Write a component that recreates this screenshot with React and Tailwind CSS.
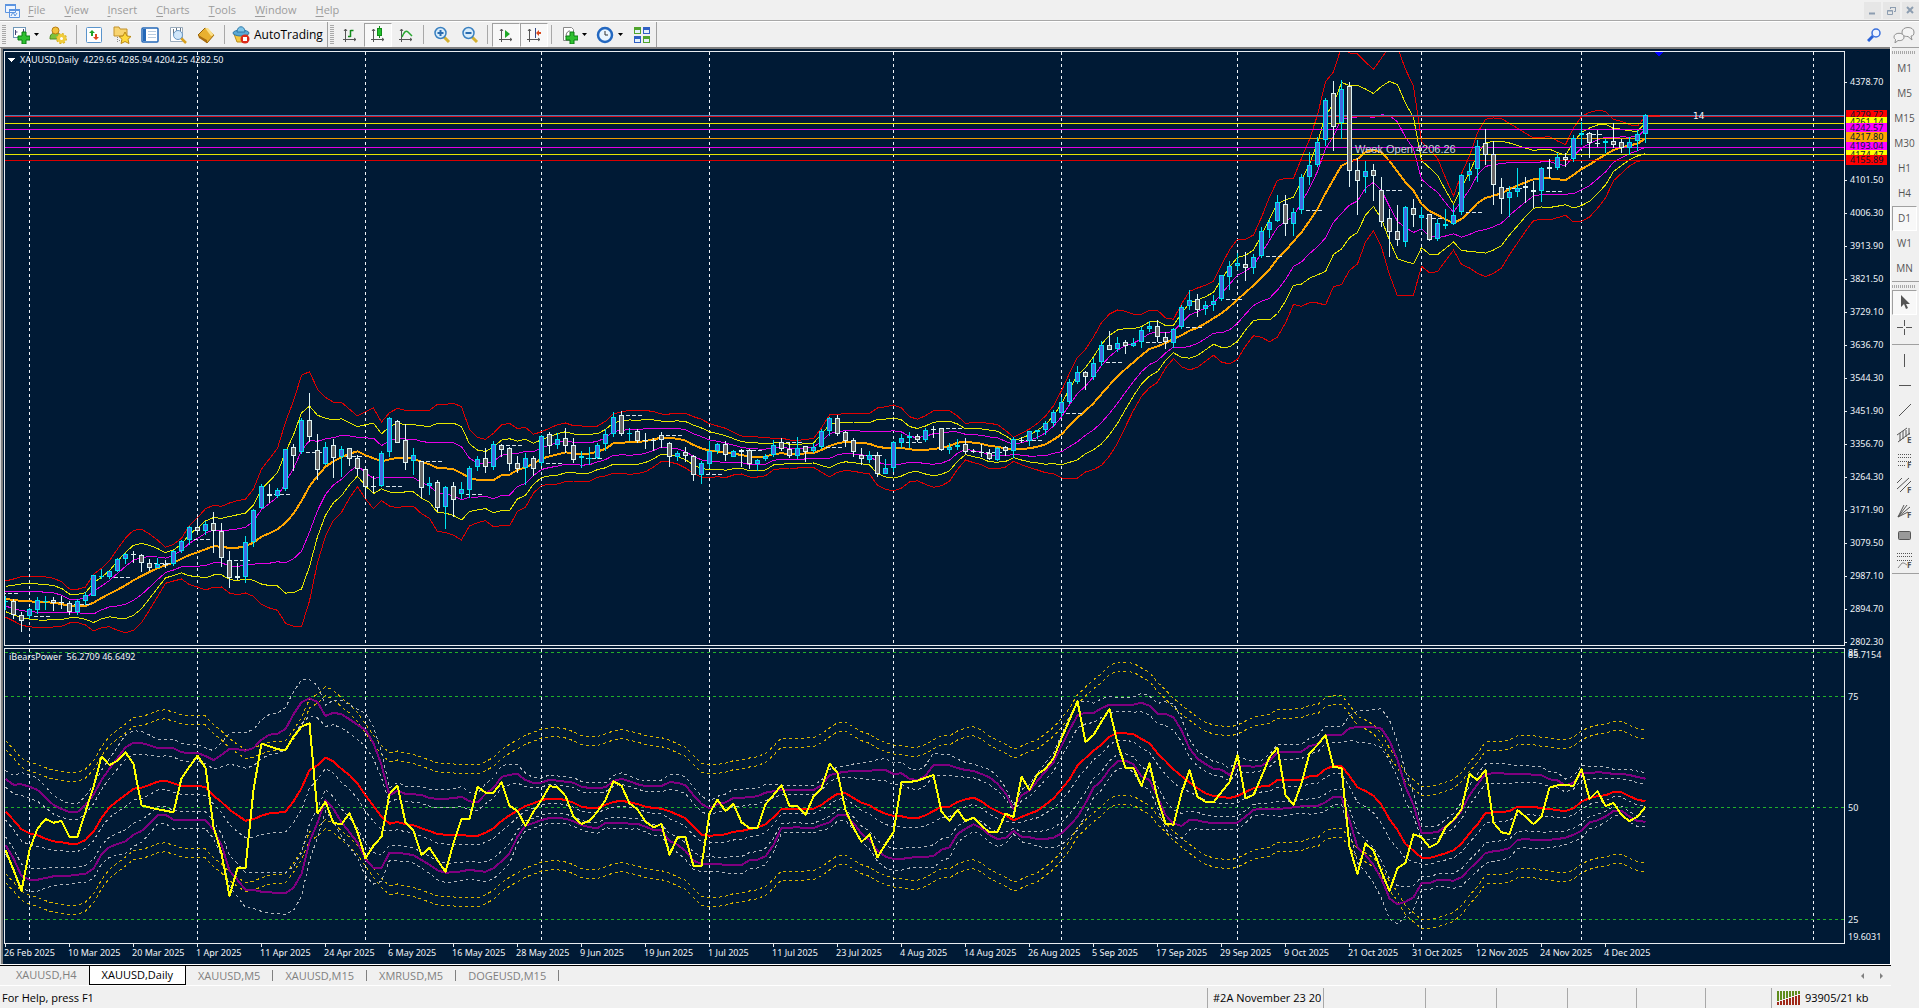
import React from 'react';

// Every stretch holds its own baseline; values are thirds of a pixel below it.
// Candle: direction, high, body top, body bottom, low
const candleStretches = [
  {
    start: 0,
    base: 350,
    rows: [
      ['u', 738, 752, 757, 780], ['d', 748, 753, 796, 806], ['d', 786, 795, 814, 846], ['u', 775, 778, 799, 808],
      ['u', 741, 751, 781, 792], ['u', 738, 752, 755, 780], ['d', 740, 751, 760, 782], ['d', 738, 757, 760, 777],
      ['d', 752, 760, 785, 796], ['u', 748, 754, 785, 795], ['u', 725, 736, 754, 766], ['u', 674, 676, 737, 739],
      ['u', 656, 679, 682, 688], ['u', 662, 664, 680, 687], ['u', 625, 628, 664, 666], ['u', 608, 613, 628, 642],
      ['d', 603, 613, 616, 638], ['d', 613, 616, 640, 665], ['d', 628, 640, 653, 663], ['u', 625, 642, 653, 655],
      ['d', 630, 642, 645, 654], ['u', 600, 604, 643, 648], ['u', 570, 574, 604, 608], ['u', 528, 532, 569, 584],
      ['d', 505, 532, 544, 556], ['u', 512, 522, 544, 554], ['d', 487, 520, 544, 608], ['d', 519, 544, 625, 650],
      ['d', 603, 631, 685, 713], ['d', 640, 679, 685, 690], ['u', 558, 577, 682, 698], ['u', 477, 479, 577, 590],
      ['u', 402, 409, 475, 477], ['d', 403, 433, 439, 458], ['u', 414, 421, 437, 443], ['u', 297, 298, 418, 422],
      ['d', 282, 290, 317, 362], ['u', 204, 211, 307, 311], ['d', 129, 211, 260, 276], ['d', 252, 301, 359, 389],
      ['u', 275, 292, 343, 345], ['d', 267, 286, 325, 383], ['u', 289, 298, 320, 380], ['d', 294, 295, 328, 348],
      ['d', 316, 325, 358, 378], ['d', 352, 358, 412, 448], ['d', 378, 408, 411, 430], ['u', 303, 310, 409, 412],
      ['u', 202, 205, 305, 320], ['d', 210, 214, 278, 280], ['d', 223, 271, 338, 360], ['u', 294, 316, 334, 375],
      ['d', 333, 334, 415, 443], ['u', 381, 398, 409, 434], ['d', 390, 397, 475, 486], ['u', 409, 410, 472, 536],
      ['d', 397, 409, 451, 500], ['u', 396, 418, 432, 446], ['u', 348, 355, 421, 445], ['u', 318, 328, 352, 362],
      ['d', 294, 325, 350, 368], ['u', 273, 283, 350, 360], ['d', 281, 286, 301, 320], ['d', 291, 295, 343, 362],
      ['d', 318, 340, 358, 370], ['u', 309, 325, 355, 405], ['d', 318, 325, 358, 378],
    ],
  },
  {
    start: 67,
    base: 380,
    rows: [
      ['u', 165, 168, 250, 258], ['d', 156, 163, 199, 222], ['u', 160, 177, 196, 208], ['d', 143, 175, 199, 218],
      ['d', 174, 196, 241, 248], ['u', 214, 229, 235, 263], ['u', 201, 233, 236, 256], ['u', 190, 196, 234, 238],
      ['u', 148, 163, 193, 214], ['u', 96, 112, 163, 170], ['d', 94, 105, 163, 168], ['u', 144, 160, 163, 184],
      ['d', 148, 153, 183, 188], ['d', 160, 179, 182, 206], ['d', 175, 179, 182, 212], ['d', 155, 166, 181, 205],
      ['d', 187, 188, 230, 261], ['u', 212, 220, 230, 243], ['d', 202, 217, 227, 245], ['d', 225, 229, 284, 302],
      ['u', 243, 250, 284, 311], ['u', 183, 214, 253, 263], ['u', 189, 192, 214, 223], ['d', 184, 192, 226, 243],
      ['u', 209, 214, 230, 232], ['d', 206, 210, 217, 260], ['d', 206, 211, 253, 268], ['u', 238, 241, 251, 274],
      ['u', 222, 229, 238, 244], ['u', 180, 196, 226, 232], ['d', 174, 187, 208, 212], ['d', 187, 208, 229, 233],
      ['u', 171, 205, 227, 236], ['d', 198, 199, 215, 245], ['u', 189, 202, 212, 220], ['u', 148, 152, 202, 206],
      ['u', 110, 115, 152, 168], ['d', 105, 115, 163, 169], ['d', 153, 157, 182, 200], ['d', 174, 181, 215, 230],
      ['d', 205, 226, 238, 256], ['u', 214, 226, 241, 248], ['d', 217, 226, 281, 290], ['u', 238, 265, 281, 283],
      ['u', 184, 187, 265, 275], ['u', 163, 175, 188, 205], ['u', 156, 169, 175, 203], ['d', 163, 169, 181, 187],
      ['u', 145, 151, 180, 185], ['d', 138, 148, 151, 173], ['d', 144, 145, 209, 212], ['u', 190, 202, 209, 221],
      ['u', 176, 196, 202, 210], ['d', 174, 193, 217, 223], ['d', 208, 214, 217, 220], ['d', 193, 217, 220, 232],
      ['d', 206, 220, 238, 240], ['u', 200, 203, 239, 243], ['d', 199, 202, 214, 229], ['u', 172, 178, 214, 235],
      ['d', 172, 180, 184, 189], ['u', 152, 154, 184, 199], ['u', 149, 151, 157, 178], ['u', 122, 130, 151, 164],
      ['u', 91, 97, 130, 142],
    ],
  },
  {
    start: 132,
    base: 50,
    rows: [
      ['u', 1042, 1057, 1090, 1100], ['u', 988, 997, 1057, 1062], ['u', 948, 967, 997, 1002], ['d', 963, 967, 982, 1020],
      ['u', 923, 940, 982, 990], ['u', 873, 886, 937, 947], ['d', 843, 886, 899, 900], ['u', 862, 880, 896, 906],
      ['d', 870, 877, 889, 911], ['u', 865, 880, 887, 892], ['u', 831, 841, 877, 895], ['u', 813, 829, 838, 845],
      ['d', 810, 829, 862, 875], ['d', 846, 862, 877, 896], ['u', 834, 836, 880, 893], ['u', 765, 770, 831, 836],
      ['u', 720, 751, 769, 779], ['d', 733, 748, 781, 801], ['u', 752, 766, 776, 795], ['u', 735, 754, 766, 783],
      ['u', 674, 676, 748, 752], ['u', 633, 649, 680, 720], ['u', 609, 640, 649, 661], ['d', 606, 643, 653, 692],
      ['u', 612, 620, 653, 671], ['u', 530, 542, 619, 624], ['u', 508, 515, 541, 563], ['u', 435, 455, 514, 517],
      ['d', 435, 461, 523, 557], ['u', 473, 485, 523, 557], ['u', 372, 380, 481, 491], ['u', 307, 346, 380, 404],
      ['u', 262, 277, 346, 350], ['u', 144, 151, 271, 287], ['d', 93, 130, 230, 302], ['u', 90, 118, 219, 266],
      ['d', 96, 109, 364, 411], ['d', 325, 361, 394, 494], ['u', 333, 364, 382, 429], ['d', 342, 361, 379, 452],
      ['d', 381, 421, 517, 530], ['d', 478, 505, 547, 621], ['d', 465, 542, 571, 587], ['u', 468, 472, 577, 590],
      ['d', 447, 475, 496, 530], ['u', 470, 496, 505, 540], ['d', 491, 493, 571, 574], ['u', 506, 520, 568, 574],
      ['u', 477, 523, 529, 536], ['u', 465, 496, 523, 525], ['u', 371, 374, 487, 494], ['u', 340, 364, 374, 394],
      ['u', 269, 289, 358, 396], ['d', 237, 280, 316, 345], ['d', 274, 313, 406, 464], ['d', 384, 412, 448, 491],
      ['u', 407, 427, 445, 500], ['u', 353, 415, 427, 440], ['d', 381, 409, 415, 458], ['d', 394, 421, 427, 475],
      ['u', 350, 355, 424, 455], ['d', 328, 352, 358, 385], ['u', 308, 322, 355, 360], ['d', 310, 322, 331, 350],
      ['u', 255, 265, 328, 335], ['u', 217, 250, 254, 285], ['d', 246, 250, 280, 323], ['d', 240, 279, 282, 291],
      ['u', 268, 274, 278, 308], ['d', 220, 274, 286, 293], ['d', 266, 277, 295, 310], ['u', 262, 277, 295, 315],
      ['u', 240, 253, 274, 303], ['u', 192, 196, 253, 279],
    ],
  },
];

// Middle line and outer upper band
const bandStretches = [
  {
    base: 350,
    rows: [
      [747, 693], [750, 687], [753, 680], [754, 678], [756, 679], [757, 681], [758, 685], [762, 695], [768, 717], [768, 718],
      [768, 711], [758, 673], [744, 655], [731, 632], [719, 597], [706, 564], [691, 541], [678, 538], [666, 552], [655, 570],
      [646, 592], [638, 583], [626, 565], [615, 526], [607, 503], [598, 476], [589, 466], [590, 469], [594, 459], [593, 452],
      [588, 447], [578, 417], [560, 357], [550, 326], [538, 295], [518, 216], [491, 153], [453, 76], [409, 65], [378, 118],
      [350, 142], [334, 157], [322, 157], [311, 178], [304, 198], [316, 185], [325, 174], [334, 216], [328, 188], [324, 175],
      [325, 181], [325, 181], [336, 181], [343, 181], [354, 163], [355, 163], [358, 160], [370, 170], [383, 238], [390, 262],
      [390, 268], [390, 250], [376, 225], [374, 220], [360, 236], [352, 232], [341, 253],
    ],
  },
  {
    base: 380,
    rows: [
      [236, 155], [229, 145], [223, 134], [217, 129], [220, 137], [222, 138], [221, 138], [215, 138], [206, 124], [190, 101],
      [188, 96], [187, 91], [187, 93], [183, 91], [178, 95], [173, 102], [174, 102], [176, 100], [182, 100], [195, 110],
      [205, 118], [212, 131], [214, 138], [219, 145], [221, 157], [225, 168], [230, 169], [231, 171], [230, 173], [222, 175],
      [220, 174], [222, 180], [223, 182], [220, 178], [219, 176], [210, 143], [198, 105], [190, 103], [186, 101], [187, 100],
      [189, 100], [191, 100], [200, 84], [204, 80], [204, 75], [204, 84], [208, 110], [210, 118], [210, 107], [207, 92],
      [204, 91], [198, 92], [188, 108], [185, 130], [188, 128], [191, 128], [198, 130], [200, 134], [206, 151], [208, 172],
      [207, 160], [205, 147], [200, 130], [193, 108], [179, 77],
    ],
  },
  {
    base: 50,
    rows: [
      [1153, 1022], [1127, 970], [1103, 922], [1082, 898], [1060, 861], [1032, 818], [1005, 792], [980, 780], [957, 784], [937, 793],
      [916, 793], [897, 781], [889, 781], [879, 804], [867, 808], [856, 762], [842, 724], [833, 714], [820, 706], [805, 694],
      [790, 644], [771, 600], [748, 568], [728, 568], [706, 555], [682, 502], [658, 441], [626, 391], [602, 385], [574, 385],
      [547, 325], [513, 268], [477, 195], [430, 95], [388, 66], [347, -10], [335, 9], [327, 12], [306, 36], [300, 58],
      [308, 24], [333, -8], [365, -8], [397, 58], [422, 108], [462, 275], [483, 298], [495, 325], [508, 383], [519, 438],
      [507, 371], [486, 318], [459, 248], [444, 208], [437, 204], [430, 206], [417, 220], [407, 235], [397, 250], [388, 264],
      [385, 262], [385, 260], [388, 273], [390, 284], [375, 234], [357, 200], [344, 187], [328, 181], [314, 184], [300, 208],
      [292, 214], [286, 224], [281, 228], [265, 199],
    ],
  },
];

// Average, upper channel, lower channel, power line
const powerRows = [
  [515, 417, 615, 630], [540, 434, 655, 690], [568, 433, 708, 752], [580, 440, 719, 630], [586, 450, 719, 566],
  [596, 472, 714, 537], [604, 495, 709, 548], [607, 507, 708, 543], [611, 516, 707, 590], [611, 516, 704, 590],
  [600, 495, 701, 515], [575, 464, 686, 440], [534, 420, 643, 350], [502, 386, 621, 375], [483, 354, 612, 362],
  [465, 322, 604, 337], [446, 308, 584, 372], [443, 309, 573, 496], [435, 316, 551, 502], [425, 324, 526, 508],
  [422, 323, 524, 512], [430, 325, 539, 517], [438, 337, 540, 415], [438, 339, 540, 380], [438, 339, 540, 347],
  [441, 348, 540, 383], [467, 360, 569, 560], [486, 345, 614, 640], [509, 327, 692, 768], [526, 328, 720, 684],
  [542, 332, 749, 683], [538, 324, 750, 450], [527, 299, 755, 311], [520, 284, 757, 319], [518, 281, 759, 328],
  [515, 267, 759, 330], [484, 223, 744, 290], [445, 187, 702, 260], [390, 175, 605, 250], [376, 186, 548, 520],
  [353, 228, 480, 485], [364, 218, 507, 549], [387, 223, 547, 553], [405, 238, 577, 520], [431, 254, 608, 577],
  [466, 270, 658, 655], [498, 310, 684, 617], [530, 375, 684, 590], [551, 466, 638, 462], [546, 452, 639, 437],
  [553, 462, 641, 548], [556, 463, 646, 572], [565, 465, 660, 645], [573, 474, 674, 623], [582, 477, 691, 660],
  [584, 476, 698, 695], [585, 475, 697, 610], [586, 470, 694, 537], [587, 484, 689, 536], [588, 487, 693, 440],
  [578, 462, 695, 458], [565, 444, 685, 458], [543, 411, 664, 427], [526, 404, 640, 497], [512, 402, 590, 513],
  [498, 420, 557, 558], [490, 429, 549, 515], [480, 428, 540, 480], [476, 419, 534, 439], [476, 422, 534, 441],
  [480, 425, 536, 468], [488, 428, 544, 530], [500, 440, 555, 552], [504, 444, 562, 542], [503, 444, 564, 515],
  [494, 442, 549, 480], [486, 423, 549, 424], [482, 416, 548, 437], [487, 424, 551, 490], [492, 433, 551, 508],
  [500, 438, 560, 545], [504, 438, 570, 562], [506, 438, 570, 552], [514, 427, 603, 645], [524, 428, 614, 592],
  [535, 436, 633, 592], [560, 466, 662, 678], [584, 492, 672, 678], [587, 505, 672, 520], [586, 493, 673, 479],
  [583, 487, 674, 513], [575, 474, 675, 491], [573, 474, 675, 547], [567, 471, 661, 564], [563, 469, 659, 563],
  [553, 458, 649, 493], [532, 454, 615, 465], [507, 450, 564, 435], [507, 450, 563, 498], [507, 450, 562, 498],
  [507, 450, 564, 524], [506, 450, 564, 470], [495, 436, 555, 445], [477, 406, 547, 371], [461, 399, 526, 398],
  [460, 395, 525, 510], [474, 393, 549, 563], [488, 393, 581, 606], [496, 392, 600, 583], [511, 390, 632, 652],
  [521, 390, 650, 613], [528, 402, 657, 577], [529, 400, 657, 427], [534, 416, 653, 426], [535, 421, 651, 422],
  [526, 407, 651, 413], [513, 375, 648, 405], [500, 375, 629, 515], [500, 376, 622, 542], [486, 384, 582, 510],
  [478, 390, 566, 543], [473, 393, 553, 533], [484, 402, 565, 557], [502, 412, 585, 577], [514, 431, 597, 576],
  [526, 460, 594, 521], [541, 506, 573, 531], [531, 466, 590, 410], [521, 452, 592, 450], [512, 422, 597, 403],
  [494, 394, 597, 386], [475, 367, 593, 355], [448, 318, 580, 295], [418, 270, 557, 240], [377, 226, 530, 184],
  [354, 218, 490, 306], [332, 219, 443, 285], [314, 205, 422, 245], [290, 194, 387, 207], [279, 194, 364, 310],
  [280, 194, 362, 383], [283, 194, 373, 383], [297, 188, 409, 438], [310, 197, 420, 370], [340, 221, 470, 475],
  [363, 222, 525, 551], [388, 232, 550, 554], [408, 271, 558, 460], [427, 325, 540, 390], [445, 356, 541, 470],
  [460, 372, 547, 485], [468, 386, 549, 487], [471, 389, 548, 456], [474, 405, 548, 426], [468, 376, 548, 345],
  [456, 378, 530, 475], [445, 380, 509, 465], [439, 377, 507, 410], [437, 362, 507, 352], [420, 336, 507, 323],
  [420, 336, 505, 465], [420, 336, 502, 495], [419, 335, 499, 430], [409, 318, 499, 340], [407, 313, 498, 315],
  [387, 285, 487, 285], [378, 285, 470, 382], [378, 285, 470, 383], [408, 265, 540, 620], [442, 261, 622, 702],
  [453, 261, 645, 610], [467, 262, 675, 632], [495, 266, 717, 695], [538, 302, 775, 753], [570, 360, 793, 685],
  [612, 440, 785, 668], [632, 495, 772, 583], [653, 578, 730, 592], [654, 579, 729, 622], [647, 576, 720, 610],
  [640, 560, 720, 563], [631, 543, 722, 540], [611, 513, 712, 508], [580, 466, 687, 402], [553, 433, 664, 420],
  [519, 402, 639, 390], [517, 400, 634, 548], [517, 400, 631, 577], [513, 402, 624, 582], [500, 402, 600, 510],
  [500, 402, 597, 530], [500, 404, 600, 552], [505, 406, 600, 530], [507, 418, 599, 443], [511, 421, 597, 436],
  [513, 437, 593, 435], [505, 428, 584, 438], [485, 399, 572, 387], [475, 399, 547, 477], [468, 397, 541, 453],
  [466, 398, 530, 498], [456, 402, 513, 489], [457, 402, 512, 525], [469, 405, 530, 543], [479, 411, 543, 530],
  [484, 416, 545, 500],
];

// Weekly open markers: bar, y
const weekOpens = [
  [-1, 593], [3, 616], [8, 604], [13, 577], [18, 563], [23, 539], [28, 560], [33, 494], [37, 452], [42, 456], [47, 486],
  [52, 461], [57, 494], [62, 445], [67, 463], [72, 458], [77, 415], [82, 435], [87, 474], [92, 450], [97, 442], [102, 447],
  [107, 455], [112, 442], [117, 428], [122, 452], [127, 440], [132, 413], [137, 362], [142, 342], [147, 327], [152, 299],
  [157, 256], [162, 210], [172, 190], [177, 218], [182, 212], [187, 188], [192, 191], [197, 134],
];

const separators = [29, 197, 365, 541, 709, 893, 1061, 1237, 1421, 1581, 1813];

const priceLevels = [
  { y: 115, color: '#4682b4' },
  { y: 116, color: '#d81020' },
  { y: 123, color: '#e6e600' },
  { y: 129, color: '#e600e6' },
  { y: 138, color: '#f09c00' },
  { y: 147, color: '#e600e6' },
  { y: 154, color: '#e6e600' },
  { y: 160, color: '#d80000' },
];

const priceTags = [
  { y: 110, value: '4279.72', color: '#ff0000' },
  { y: 117, value: '4261.14', color: '#ffff00' },
  { y: 123, value: '4242.57', color: '#ff00ff' },
  { y: 141, value: '4193.04', color: '#ff00ff' },
  { y: 132, value: '4217.80', color: '#ffa500' },
  { y: 150, value: '4174.47', color: '#ffff00' },
  { y: 155, value: '4155.89', color: '#ff0000' },
];

const priceAxis = [
  [82, '4378.70'], [180, '4101.50'], [213, '4006.30'], [246, '3913.90'], [279, '3821.50'], [312, '3729.10'],
  [345, '3636.70'], [378, '3544.30'], [411, '3451.90'], [444, '3356.70'], [477, '3264.30'], [510, '3171.90'],
  [543, '3079.50'], [576, '2987.10'], [609, '2894.70'], [642, '2802.30'],
];

const dates = [
  '26 Feb 2025', '10 Mar 2025', '20 Mar 2025', '1 Apr 2025', '11 Apr 2025', '24 Apr 2025', '6 May 2025', '16 May 2025',
  '28 May 2025', '9 Jun 2025', '19 Jun 2025', '1 Jul 2025', '11 Jul 2025', '23 Jul 2025', '4 Aug 2025', '14 Aug 2025',
  '26 Aug 2025', '5 Sep 2025', '17 Sep 2025', '29 Sep 2025', '9 Oct 2025', '21 Oct 2025', '31 Oct 2025', '12 Nov 2025',
  '24 Nov 2025', '4 Dec 2025',
];

const barX = (i) => 5 + i * 8;

const candles = candleStretches.flatMap(({ start, base, rows }) =>
  rows.map(([dir, ...values], i) => ({
    x: barX(start + i),
    up: dir === 'u',
    ys: values.map((v) => Math.round(base + v / 3)),
  }))
);

const bands = bandStretches.flatMap(({ base, rows }) =>
  rows.map(([mid, top]) => ({ mid: base + mid / 3, spread: (mid - top) / 3 }))
);

const power = powerRows.map((row) => row.map((v) => 640 + v / 3));

const toPoints = (list, pick) => list.map((item, i) => `${barX(i) + 0.5},${pick(item).toFixed(1)}`).join(' ');

const Line = ({ points, color, width = 1, dash }) => (
  <polyline
    points={points}
    fill="none"
    stroke={color}
    strokeWidth={width}
    strokeDasharray={dash}
    strokeLinejoin="round"
  />
);

const PriceChart = () => (
  <g clipPath="url(#price-area)">
    {separators.map((x) => (
      <path key={x} d={`M${x + 0.5} 52V645`} stroke="#f0f4f8" strokeDasharray="3 3" />
    ))}
    {[-1, -0.7, -0.4, 0.4, 0.7, 1].map((ratio) => (
      <Line
        key={ratio}
        points={toPoints(bands, (b) => b.mid + b.spread * ratio)}
        color={{ 1: '#e00000', 0.7: '#e6e600', 0.4: '#e600e6' }[Math.abs(ratio)]}
      />
    ))}
    <Line points={toPoints(bands, (b) => b.mid)} color="#ffa500" width={2} />
    {priceLevels.map(({ y, color }) => (
      <rect key={y} x="5" y={y} width="1839" height="1" fill={color} />
    ))}
    {weekOpens.map(([bar, y]) => (
      <path key={bar} d={`M${barX(bar) + 5} ${y + 0.5}h16`} stroke="#d8e4ec" strokeDasharray="4 2" />
    ))}
    {candles.map(({ x, up, ys: [high, top, bottom, low] }) => {
      const edge = up ? '#00e4f0' : '#e0f4f4';
      return (
        <g key={x}>
          <rect x={x} y={high} width="1" height={low - high} fill={edge} />
          <rect x={x - 2} y={top} width="5" height={Math.max(bottom - top, 1)} fill={edge} />
          {bottom - top > 2 && (
            <rect x={x - 1} y={top + 1} width="3" height={bottom - top - 2} fill={up ? '#4169e1' : '#696969'} />
          )}
        </g>
      );
    })}
    <rect x="1648" y="115" width="12" height="2" fill="#f01818" />
    <path d="M1654 52h9l-4 4h-1z" fill="#0000ff" />
  </g>
);

const PowerChart = () => (
  <g clipPath="url(#power-area)">
    {separators.map((x) => (
      <path key={x} d={`M${x + 0.5} 649V943`} stroke="#f0f4f8" strokeDasharray="3 3" />
    ))}
    {[652, 696, 807, 919].map((y) => (
      <path key={y} d={`M5 ${y + 0.5}H1844`} stroke="#22b02a" strokeDasharray="3 3" />
    ))}
    {[-71, -62, 62, 71].map((shift) => (
      <Line key={shift} points={toPoints(power, ([avg]) => avg + shift)} color="#d8b400" dash="3 3" />
    ))}
    {[0.75, 1.26].map((ratio) => (
      <g key={ratio}>
        <Line points={toPoints(power, ([avg, top]) => avg + (top - avg) * ratio)} color="#b4b8bc" dash="3 3" />
        <Line points={toPoints(power, ([avg, , low]) => avg + (low - avg) * ratio)} color="#b4b8bc" dash="3 3" />
      </g>
    ))}
    <Line points={toPoints(power, ([avg, , low]) => avg + (low - avg) * 0.25)} color="#b4b8bc" dash="3 3" />
    <Line points={toPoints(power, ([, top]) => top)} color="#800080" width={2} />
    <Line points={toPoints(power, ([, , low]) => low)} color="#800080" width={2} />
    <Line points={toPoints(power, ([avg]) => avg)} color="#ff0000" width={2} />
    <Line points={toPoints(power, ([, , , line]) => line)} color="#ffff00" width={2} />
  </g>
);

const ChartWindow = () => (
  <svg
    viewBox="0 47 1891 917"
    className="block h-auto w-full font-['Noto_Sans',sans-serif] text-[9px]"
    role="img"
    aria-label="XAUUSD daily chart"
  >
    <defs>
      <clipPath id="price-area">
        <rect x="5" y="52" width="1839" height="593" />
      </clipPath>
      <clipPath id="power-area">
        <rect x="5" y="649" width="1839" height="294" />
      </clipPath>
    </defs>
    <g shapeRendering="crispEdges">
      <rect x="0" y="47" width="1891" height="917" fill="#808080" />
      <rect x="0" y="48" width="1" height="916" fill="#d8d8d8" />
      <rect x="3" y="49" width="1887" height="915" fill="#001a35" />
      <rect x="1890" y="47" width="1" height="917" fill="#ffffff" />
      <PriceChart />
      <PowerChart />
      <path d="M4.5 645.5V51.5H1844.5V645.5zM4.5 648.5H1844.5V943.5H4.5z" fill="none" stroke="#e8ecf0" />
      {priceAxis.map(([y]) => (
        <rect key={y} x="1845" y={y} width="2" height="1" fill="#e8ecf0" />
      ))}
      {dates.map((label, i) => (
        <rect key={label} x={5 + i * 64} y="944" width="1" height="3" fill="#e8ecf0" />
      ))}
      <path d="M8 58h7l-3 4h-1z" fill="#ffffff" />
    </g>
    <g fill="#f0f4f8">
      <text x="20" y="63" xmlSpace="preserve">XAUUSD,Daily  4229.65 4285.94 4204.25 4282.50</text>
      <text x="9" y="660" xmlSpace="preserve">iBearsPower  56.2709 46.6492</text>
      {priceAxis.map(([y, value]) => (
        <text key={value} x="1850" y={y + 3}>{value}</text>
      ))}
      <text x="1848" y="656">85</text>
      <text x="1848" y="658">85.7154</text>
      <text x="1848" y="700">75</text>
      <text x="1848" y="811">50</text>
      <text x="1848" y="923">25</text>
      <text x="1848" y="940">19.6031</text>
      {dates.map((label, i) => (
        <text key={label} x={4 + i * 64} y="956">{label}</text>
      ))}
    </g>
    <text x="1355" y="153" fill="#c8d4dc" className="font-['Liberation_Sans',sans-serif] text-[11px]">Week Open 4206.26</text>
    <text x="1693" y="119" fill="#f0f4f8" className="font-['DejaVu_Sans',sans-serif] text-[9px]">14</text>
    {priceTags.map(({ y, value, color }) => (
      <g key={value}>
        <rect x="1846" y={y} width="41" height="10" fill={color} shapeRendering="crispEdges" />
        <text x="1850" y={y + 8} fill="#001a35">{value}</text>
      </g>
    ))}
  </svg>
);

/* Toolbar drawings, all on an 18 unit grid */
const Icon = ({ children }) => (
  <svg viewBox="0 0 18 18" className="size-[18px] shrink-0" fill="none" aria-hidden="true">
    {children}
  </svg>
);

const GreenPlus = () => (
  <path d="M10 6h4v4h4v4h-4v4h-4v-4H6v-4h4z" fill="#2fc030" stroke="#0b7d13" />
);

const NewOrderIcon = () => (
  <Icon>
    <rect x="1.5" y="1.5" width="12" height="10" fill="#fff" stroke="#6f97b8" />
    <path d="M3.5 4v5M3.5 6h2M11.5 3v3" stroke="#447" />
    <GreenPlus />
  </Icon>
);

const ProfilesIcon = () => (
  <Icon>
    <path d="M1 13c0-5 2-6 6-6s5 2 5 6z" fill="#7cc23c" stroke="#4c8a1c" />
    <circle cx="6.5" cy="4.5" r="3.5" fill="#f3c23c" stroke="#b87c10" />
    <circle cx="12.5" cy="12.5" r="4.5" stroke="#d8b020" strokeDasharray="2 1.5" strokeWidth="2" />
    <circle cx="12.5" cy="12.5" r="3" fill="#fff" stroke="#f0cc3c" strokeWidth="3" />
  </Icon>
);

const MarketWatchIcon = () => (
  <Icon>
    <rect x="1.5" y="1.5" width="15" height="15" rx="1" fill="#fff" stroke="#5a94cc" />
    <path d="M7 4l3 3H8v3H6V7H4z" fill="#1fa32a" />
    <path d="M11 14l3-3h-2V8h-2v3H8z" fill="#e0471c" />
  </Icon>
);

const NavigatorIcon = () => (
  <Icon>
    <path d="M1 3V1h5l1 2h7v7H1z" fill="#f8d470" stroke="#c2912a" />
    <path d="M4.5 11v6M6 14.5h3" stroke="#888" strokeDasharray="1 1" />
    <path d="M12 6l2 4 4 .5-3 2.8 1 4.2-4-2-4 2 1-4.2-3-2.8 4-.5z" fill="#ffd93c" stroke="#bb8a14" />
  </Icon>
);

const TerminalIcon = () => (
  <Icon>
    <rect x="1" y="2" width="16" height="14" rx="1" fill="#fff" stroke="#2468b8" strokeWidth="1.5" />
    <path d="M3.5 3v12" stroke="#2468b8" strokeWidth="3" />
    <path d="M7 5.5h8M7 8.5h8M7 11.5h8" stroke="#b8cce0" />
  </Icon>
);

const TesterIcon = () => (
  <Icon>
    <path d="M1.5 1.5h12v14h-12z" fill="#fff" stroke="#9ab" />
    <path d="M4.5 3v6M7.5 2v4M11.5 2v4" stroke="#678" />
    <path d="M12 12l5 5" stroke="#d8a020" strokeWidth="2.5" />
    <circle cx="9" cy="9" r="4.5" fill="#cfe6fa" stroke="#6a98c4" />
  </Icon>
);

const MetaEditorIcon = () => (
  <Icon>
    <path d="M1 9l7-7 9 7-7 8z" fill="#e8b030" stroke="#97650c" />
    <path d="M8 2h3l6 7-3 1z" fill="#fbe08a" />
    <path d="M1 9l1 3 8 5v-3z" fill="#a86c10" />
  </Icon>
);

const AutoTradingIcon = () => (
  <Icon>
    <path d="M2 8l3 8h8l3-8z" fill="#f4c840" stroke="#b98d1a" />
    <ellipse cx="9" cy="7" rx="8" ry="3" fill="#5aa8d4" stroke="#2f78a8" />
    <path d="M5 6c0-7 8-7 8 0z" fill="#7cc4e8" stroke="#2f78a8" />
    <circle cx="13" cy="13" r="4.5" fill="#dc2a1a" />
    <rect x="11" y="11" width="4" height="4" fill="#fff" />
  </Icon>
);

const Axes = () => <path d="M4.5 3v13M2 13.5h13M3 5l1.5-2L6 5M13 12l2 1.5-2 1.5" stroke="#555" />;

const BarChartIcon = () => (
  <Icon>
    <Axes />
    <path d="M9.5 4v7M9.5 10.5H7M9.5 4.5h3" stroke="#128a1a" strokeWidth="1.5" />
  </Icon>
);

const CandleChartIcon = () => (
  <Icon>
    <Axes />
    <path d="M10.5 0v12" stroke="#128a1a" />
    <rect x="8.5" y="2.5" width="4" height="7" fill="#23c02c" stroke="#128a1a" />
  </Icon>
);

const LineChartIcon = () => (
  <Icon>
    <Axes />
    <path d="M5 11c2-5 4-7 6-5l4 4" stroke="#2aa832" strokeWidth="1.5" />
  </Icon>
);

const ZoomIcon = ({ plus }) => (
  <Icon>
    <path d="M11 11l5 5" stroke="#d4b030" strokeWidth="3" />
    <circle cx="7.5" cy="7" r="5.5" fill="#d8ecfa" stroke="#3a80c0" strokeWidth="1.5" />
    <path d={plus ? 'M4.5 7h6M7.5 4v6' : 'M4.5 7h6'} stroke="#2a6cb0" strokeWidth="2" />
  </Icon>
);

const AutoScrollIcon = () => (
  <Icon>
    <Axes />
    <path d="M8 4l5 4-5 4z" fill="#1fa828" />
  </Icon>
);

const ChartShiftIcon = () => (
  <Icon>
    <Axes />
    <path d="M10.5 2v10" stroke="#334a88" />
    <path d="M11 7l3-3v2h2v2h-2v2z" fill="#d8481c" />
  </Icon>
);

const IndicatorsIcon = () => (
  <Icon>
    <path d="M3.5 1.5h8l2 2v11h-10z" fill="#fff" stroke="#888" />
    <path d="M6 11c0-3 1-6 4-6" stroke="#666" />
    <GreenPlus />
  </Icon>
);

const ClockIcon = () => (
  <Icon>
    <circle cx="9" cy="9" r="7" fill="#e8f4ff" stroke="#2468c0" strokeWidth="2.5" />
    <path d="M9 5v4h3" stroke="#333" />
  </Icon>
);

const TemplatesIcon = () => (
  <Icon>
    <path d="M1 1h7v7H1zM10 10h7v7h-7z" fill="#4fa42c" />
    <path d="M10 1h7v7h-7zM1 10h7v7H1z" fill="#2f5fc4" />
    <path d="M2 4h5v3H2zM11 4h5v3h-5zM2 13h5v3H2zM11 13h5v3h-5z" fill="#e4f0fa" />
  </Icon>
);

const Caret = () => (
  <svg viewBox="0 0 5 3" className="h-[3px] w-[5px]" aria-hidden="true">
    <path d="M0 0h5L2.5 3z" fill="#000" />
  </svg>
);

const ToolButton = ({ label, icon: Drawing, pressed, caret, ...rest }) => {
  if (caret) {
    return (
      <button type="button" aria-label={label} className="flex h-full w-9 items-center gap-1 pl-1">
        <Drawing />
        <Caret />
      </button>
    );
  }
  return (
    <button
      type="button"
      aria-label={label}
      className={
        pressed
          ? 'flex h-6 w-7 items-center justify-center border border-[#a0a0a0] border-r-white border-b-white bg-[#f8f8f8]'
          : 'flex h-full w-7 items-center justify-center'
      }
    >
      <Drawing {...rest} />
    </button>
  );
};

const Divider = () => (
  <div className="flex h-full w-2 justify-center py-[3px]">
    <div className="w-px bg-[#a8a8a8]" />
  </div>
);

const Grip = () => (
  <div className="mx-0.5 h-5 w-1 bg-[repeating-linear-gradient(#a8a8a8_0px_1px,#f0f0f0_1px_2px)]" />
);

const menus = ['File', 'View', 'Insert', 'Charts', 'Tools', 'Window', 'Help'];

const MenuBar = () => (
  <header className="flex h-[21px] items-center border-b border-[#a8a8a8] pl-[5px]">
    <svg viewBox="0 0 15 15" className="size-[15px]" fill="none" aria-hidden="true">
      <path d="M.5 1.5h10v8H.5zM4.5 6.5h10v8h-10z" fill="#eef5ff" stroke="#5c94e0" />
      <path d="M0 2h11M4 7h11" stroke="#5c94e0" strokeWidth="2" />
      <path d="M6 13l2-4 2 4 2-3" stroke="#5c94e0" />
    </svg>
    <nav className="ml-2 flex gap-[19px] text-[11px] text-[#9c9c9c]">
      {menus.map((name) => (
        <button key={name} type="button" className="leading-4">
          <span className="underline underline-offset-2">{name[0]}</span>
          {name.slice(1)}
        </button>
      ))}
    </nav>
    <div className="ml-auto flex gap-0.5">
      <button type="button" aria-label="Minimize" className="flex size-[17px] items-center justify-center bg-[#e6e6e6]">
        <svg viewBox="0 0 9 9" className="size-[9px]"><path d="M1 7.5h6" stroke="#8c9db0" strokeWidth="2" /></svg>
      </button>
      <button type="button" aria-label="Restore" className="flex size-[17px] items-center justify-center bg-[#e6e6e6]">
        <svg viewBox="0 0 9 9" className="size-[9px]" fill="none" stroke="#8c9db0">
          <path d="M.5 4.5h5v4h-5zM.5 5h5M3.5 3V1.5h5v4H7M3 1.5h6" />
        </svg>
      </button>
      <button type="button" aria-label="Close" className="flex size-[17px] items-center justify-center bg-[#e6e6e6]">
        <svg viewBox="0 0 9 9" className="size-[9px]"><path d="M1 1l6 6M7 1L1 7" stroke="#8c9db0" strokeWidth="2" /></svg>
      </button>
    </div>
  </header>
);

const ToolBar = () => (
  <div className="flex h-[26px] items-center border-t border-white">
    <Grip />
    <ToolButton label="New Chart" icon={NewOrderIcon} caret />
    <ToolButton label="Profiles" icon={ProfilesIcon} />
    <Divider />
    <ToolButton label="Market Watch" icon={MarketWatchIcon} />
    <ToolButton label="Navigator" icon={NavigatorIcon} />
    <ToolButton label="Terminal" icon={TerminalIcon} />
    <ToolButton label="Strategy Tester" icon={TesterIcon} />
    <ToolButton label="MetaEditor" icon={MetaEditorIcon} />
    <Divider />
    <button type="button" className="flex h-full items-center gap-1 px-1 text-[12px] leading-4 text-black">
      <AutoTradingIcon />
      AutoTrading
    </button>
    <div className="h-full w-px bg-[#a0a0a0]" />
    <Grip />
    <ToolButton label="Bar Chart" icon={BarChartIcon} />
    <ToolButton label="Candlesticks" icon={CandleChartIcon} pressed />
    <ToolButton label="Line Chart" icon={LineChartIcon} />
    <Divider />
    <ToolButton label="Zoom In" icon={ZoomIcon} plus />
    <ToolButton label="Zoom Out" icon={ZoomIcon} />
    <Divider />
    <ToolButton label="Auto Scroll" icon={AutoScrollIcon} pressed />
    <ToolButton label="Chart Shift" icon={ChartShiftIcon} pressed />
    <Divider />
    <ToolButton label="Indicators" icon={IndicatorsIcon} caret />
    <ToolButton label="Periods" icon={ClockIcon} caret />
    <ToolButton label="Templates" icon={TemplatesIcon} />
    <div className="h-full w-px bg-[#a0a0a0]" />
    <div className="ml-auto flex items-center gap-3 pr-1">
      <button type="button" aria-label="Search">
        <svg viewBox="0 0 14 14" className="size-3.5" fill="none">
          <path d="M1 13l5-5" stroke="#2a62d8" strokeWidth="3" />
          <circle cx="9" cy="5" r="4" fill="#eef4ff" stroke="#3a70dc" strokeWidth="1.5" />
        </svg>
      </button>
      <button type="button" aria-label="Messages">
        <svg viewBox="0 0 22 16" className="h-4 w-[22px]" fill="#f4f4f4" stroke="#909090">
          <path d="M9 5c0-6 12-6 12 0 0 3-1 4-3 4l1 4-4-3.5c-4 0-6-1-6-4.5z" />
          <path d="M1 10c0-5 10-5 10 0 0 3-3 4-6 3.5L2 16l.5-3.5C1.500 12 1 11 1 10z" />
        </svg>
      </button>
    </div>
  </div>
);

const frames = ['M1', 'M5', 'M15', 'M30', 'H1', 'H4', 'D1', 'W1', 'MN'];

const Letter = ({ children }) => (
  <text x="11" y="16" fill="#555" stroke="none" className="font-['Noto_Sans',sans-serif] text-[8px] font-bold">{children}</text>
);

const pointerTools = [
  { label: 'Cursor', pressed: true, art: <path d="M5 1v12l3-3 2 5 2-1-2-4h4z" fill="#555" stroke="none" /> },
  { label: 'Crosshair', art: <path d="M8.5 1v6M8.5 10v6M1 8.5h6M10 8.5h6" /> },
];

const drawingTools = [
  { label: 'Vertical Line', art: <path d="M8.5 2v13" /> },
  { label: 'Horizontal Line', art: <path d="M3 8.5h12" /> },
  { label: 'Trendline', art: <path d="M3 14L15 2" /> },
  { label: 'Equidistant Channel', art: <><path d="M1 8l10-7M2 15l12-9M4 6v8M7 4v8M10 3v7M13 1v7" /><Letter>E</Letter></> },
  {
    label: 'Fibonacci Retracement',
    art: <><path d="M2 2.5h13M2 5.5h13M2 9.5h13M2 13.5h8" strokeDasharray="1 1" /><Letter>F</Letter></>,
  },
  { label: 'Fibonacci Channel', art: <><path d="M1 6l5-5M1 12L13 1M4 15L15 4" /><Letter>F</Letter></> },
  { label: 'Fibonacci Fan', art: <><path d="M2 15L8 3M2 15l9-12M2 15L14 5M2 15l10-5" /><Letter>F</Letter></> },
  { label: 'Rectangle', art: <rect x="2.5" y="4.5" width="12" height="8" rx="1" fill="#999" /> },
  {
    label: 'Fibonacci Expansion',
    art: <><path d="M1 1.5h15M1 4.5h15M1 8.5h15" strokeDasharray="1 1" /><path d="M2 16l4-5h2l3 2" stroke="#888" /><Letter>F</Letter></>,
  },
];

const SideTool = ({ label, pressed, art }) => (
  <button
    type="button"
    aria-label={label}
    className={
      pressed
        ? 'flex h-[25px] w-[25px] items-center justify-center border border-[#a0a0a0] border-r-white border-b-white bg-[#f8f8f8]'
        : 'flex h-[25px] w-[25px] items-center justify-center'
    }
  >
    <svg viewBox="0 0 17 17" className="size-[17px]" fill="none" stroke="#555">{art}</svg>
  </button>
);

const SideGrip = () => (
  <div className="flex h-2 items-center">
    <div className="h-[3px] w-6 bg-[repeating-linear-gradient(90deg,#a8a8a8_0px_1px,#f0f0f0_1px_2px)]" />
  </div>
);

const SideBar = () => (
  <aside className="flex w-7 shrink-0 flex-col pl-px">
    <div className="border-t border-[#a0a0a0]">
      <SideGrip />
      {frames.map((frame) => (
        <button
          key={frame}
          type="button"
          className={
            frame === 'D1'
              ? 'flex h-[25px] w-[25px] items-center justify-center border border-[#a0a0a0] border-r-white border-b-white bg-[#f8f8f8] text-[10px] text-[#555]'
              : 'flex h-[25px] w-[25px] items-center justify-center text-[10px] text-[#555]'
          }
        >
          {frame}
        </button>
      ))}
    </div>
    <div className="border-t border-[#a0a0a0]">
      <SideGrip />
      {pointerTools.map((tool) => <SideTool key={tool.label} {...tool} />)}
      <div className="flex h-2 items-center"><div className="h-px w-full bg-[#a0a0a0]" /></div>
      {drawingTools.map((tool) => <SideTool key={tool.label} {...tool} />)}
    </div>
    <div className="border-t border-[#a0a0a0]" />
  </aside>
);

const tabs = ['XAUUSD,H4', 'XAUUSD,Daily', 'XAUUSD,M5', 'XAUUSD,M15', 'XMRUSD,M5', 'DOGEUSD,M15'];

const tabStyle = (name) => {
  if (name === 'XAUUSD,Daily') return 'flex items-center border border-t-0 border-black bg-white px-3 text-black';
  if (name === 'XAUUSD,H4') return 'flex items-center pr-3 pl-4 text-[#808080]';
  return 'my-1 flex items-center border-r border-[#808080] px-3 leading-3 text-[#808080]';
};

const ChartTabs = () => (
  <div className="border-t border-b border-white">
    <div className="flex h-5 border-t border-black text-[11px]">
      {tabs.map((name) => (
        <button key={name} type="button" className={tabStyle(name)}>{name}</button>
      ))}
      <div className="ml-auto flex items-center gap-4 pr-2">
        <button type="button" aria-label="Previous tabs">
          <svg viewBox="0 0 3 6" className="h-1.5 w-[3px]"><path d="M3 0v6L0 3z" fill="#808080" /></svg>
        </button>
        <button type="button" aria-label="Next tabs">
          <svg viewBox="0 0 3 6" className="h-1.5 w-[3px]"><path d="M0 0v6l3-3z" fill="#808080" /></svg>
        </button>
      </div>
    </div>
  </div>
);

const StatusBar = () => (
  <footer className="flex flex-1 items-stretch pt-0.5 text-[11px] text-black">
    <div className="flex flex-1 items-center pl-0.5">For Help, press F1</div>
    <div className="flex w-[116px] items-center border-l border-[#a8a8a8] pl-[5px] whitespace-nowrap">
      <span className="w-[108px] overflow-hidden">#2A November 23 2025</span>
    </div>
    <div className="w-[102px] border-l border-[#a8a8a8]" />
    <div className="w-[71px] border-l border-[#a8a8a8]" />
    <div className="w-[71px] border-l border-[#a8a8a8]" />
    <div className="w-[69px] border-l border-[#a8a8a8]" />
    <div className="w-[69px] border-l border-[#a8a8a8]" />
    <div className="w-[66px] border-l border-[#a8a8a8]" />
    <div className="flex w-[148px] items-center gap-1 border-l border-[#a8a8a8] pl-[5px]">
      <svg viewBox="0 0 24 14" className="h-3.5 w-6" shapeRendering="crispEdges" aria-hidden="true">
        {[0, 1, 2, 3, 4, 5, 6, 7].map((i) => (
          <g key={i}>
            <rect x={i * 3} y="0" width="2" height={10 - i} fill="#5f8c1c" />
            <rect x={i * 3} y={11 - i} width="2" height={3 + i} fill="#a02818" />
          </g>
        ))}
      </svg>
      93905/21 kb
    </div>
  </footer>
);

export default function App() {
  return (
    <div className="flex min-h-screen flex-col bg-[#f0f0f0] font-['Open_Sans','Noto_Sans',sans-serif]">
      <MenuBar />
      <ToolBar />
      <div className="flex">
        <main className="min-w-0 flex-1">
          <ChartWindow />
          <ChartTabs />
        </main>
        <SideBar />
      </div>
      <StatusBar />
    </div>
  );
}
